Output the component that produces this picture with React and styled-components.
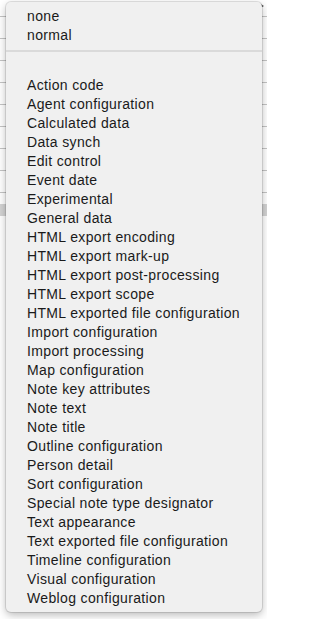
import React from "react";
import styled, { createGlobalStyle } from "styled-components";

const GlobalStyle = createGlobalStyle`
  html, body { margin: 0; padding: 0; background: #ffffff; }
  body { font-family: "Liberation Sans", Arial, sans-serif; }
`;

const Page = styled.div`
  position: relative;
  width: 267px;
  height: 619px;
  overflow: hidden;
  background: #ffffff;
`;

const Backdrop = styled.div`
  display: flex;
  flex-direction: column;
`;

const BackRow = styled.div`
  height: ${(p) => p.$h}px;
  border-bottom: 1px solid #c4c4c4;
  box-sizing: border-box;
`;

const BackBand = styled.div`
  margin-top: 11px;
  height: 12px;
  background: #d3d3d3;
`;

const Corner = styled.svg`
  position: absolute;
  right: 3px;
  top: 3px;
  width: 5px;
  height: 6px;
`;

const Menu = styled.div`
  position: absolute;
  left: 6px;
  top: 2px;
  width: 256px;
  box-sizing: border-box;
  padding: 5px 0 4px;
  background: #f0f0f0;
  border-radius: 5px;
  box-shadow: 0 0 0 1px rgba(0, 0, 0, 0.1), 0 3px 9px rgba(0, 0, 0, 0.28);
  display: flex;
  flex-direction: column;
`;

const Item = styled.div`
  height: 19px;
  line-height: 19px;
  padding-left: 21px;
  font-family: "Liberation Sans", Arial, sans-serif;
  font-size: 14px;
  letter-spacing: 0.35px;
  color: #1a1a1a;
  white-space: nowrap;
`;

const Separator = styled.div`
  height: 12px;
  display: flex;
  align-items: center;
  &::after {
    content: "";
    flex: 1;
    height: 2px;
    background: #dadada;
  }
`;

const top = ["none", "normal"];
const items = [
  "Action code",
  "Agent configuration",
  "Calculated data",
  "Data synch",
  "Edit control",
  "Event date",
  "Experimental",
  "General data",
  "HTML export encoding",
  "HTML export mark-up",
  "HTML export post-processing",
  "HTML export scope",
  "HTML exported file configuration",
  "Import configuration",
  "Import processing",
  "Map configuration",
  "Note key attributes",
  "Note text",
  "Note title",
  "Outline configuration",
  "Person detail",
  "Sort configuration",
  "Special note type designator",
  "Text appearance",
  "Text exported file configuration",
  "Timeline configuration",
  "Visual configuration",
  "Weblog configuration",
];

const backRows = [17, 22, 22, 22, 22, 22, 22, 22, 22];

export default function App() {
  return (
    <>
      <GlobalStyle />
      <Page>
        <Backdrop>
          {backRows.map((h, i) => (
            <BackRow key={i} $h={h} />
          ))}
          <BackBand />
        </Backdrop>
        <Corner viewBox="0 0 5 6">
          <path d="M0 0 L5 3 L0 6 Z" fill="#555" />
        </Corner>
        <Menu>
          {top.map((t) => (
            <Item key={t}>{t}</Item>
          ))}
          <Separator />
          <Item />
          {items.map((t) => (
            <Item key={t}>{t}</Item>
          ))}
        </Menu>
      </Page>
    </>
  );
}
